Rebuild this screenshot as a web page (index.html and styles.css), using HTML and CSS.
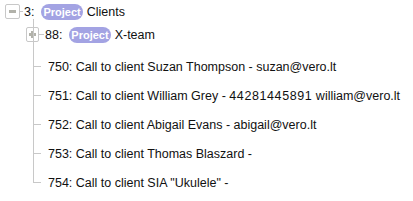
FILE: index.html
```html
<!DOCTYPE html>
<html>
<head>
<meta charset="utf-8">
<link rel="stylesheet" href="styles.css">
</head>
<body>
<div class="tree">
  <div class="row root">
    <span class="toggle"><span class="minus"></span></span>
    <span class="conn"></span>
    <span class="label">3: <span class="pill">Project</span> Clients</span>
  </div>
  <ul class="children">
    <li class="node group">
      <div class="row">
        <span class="toggle small"><span class="plus-h"></span><span class="plus-v"></span></span>
        <span class="conn short"></span>
        <span class="label">88: <span class="pill">Project</span> X-team</span>
      </div>
    </li>
    <li class="node leaf"><span class="label">750: Call to client Suzan Thompson - suzan@vero.lt</span></li>
    <li class="node leaf"><span class="label">751: Call to client William Grey - <span class="num">44281445891</span> william@vero.lt</span></li>
    <li class="node leaf"><span class="label">752: Call to client Abigail Evans - abigail@vero.lt</span></li>
    <li class="node leaf"><span class="label">753: Call to client Thomas Blaszard -</span></li>
    <li class="node leaf last"><span class="label">754: Call to client SIA "Ukulele" -</span></li>
  </ul>
</div>
</body>
</html>
```

FILE: styles.css
```css
html, body {
  margin: 0;
  padding: 0;
  background: #fff;
}
body {
  font-family: "Liberation Sans", Arial, sans-serif;
  font-size: 12.5px;
  color: #111;
}
.tree {
  padding: 0 0 0 5px;
}
.row {
  display: flex;
  align-items: center;
  height: 23px;
}
.toggle {
  position: relative;
  box-sizing: border-box;
  width: 15px;
  height: 15px;
  border: 1px solid #c8c8c8;
  border-radius: 2px;
  background: #fff;
  flex: none;
}
.toggle.small {
  width: 13px;
  height: 15px;
}
.minus {
  position: absolute;
  left: 3px;
  top: 5px;
  width: 7px;
  height: 3px;
  background: #b2b2aa;
}
.plus-h {
  position: absolute;
  left: 2px;
  top: 5px;
  width: 7px;
  height: 3px;
  background: #b2b2aa;
}
.plus-v {
  position: absolute;
  left: 4px;
  top: 3px;
  width: 3px;
  height: 7px;
  background: #b2b2aa;
}
.conn {
  width: 3px;
  height: 1px;
  background: #c8c8c8;
  margin-right: 1px;
  flex: none;
}
.conn.short {
  width: 5px;
  margin-right: 1px;
}
.label {
  white-space: nowrap;
}
.num {
  letter-spacing: 0.6px;
}
.pill {
  display: inline-block;
  background: #a3a3e3;
  color: #fff;
  font-weight: bold;
  font-size: 11px;
  line-height: 16px;
  padding: 0 2.5px;
  margin-left: 3px;
  border-radius: 8px;
}
.children {
  list-style: none;
  margin: 0;
  padding: 0 0 0 28px;
  position: relative;
}
.children::before {
  content: "";
  position: absolute;
  left: 28px;
  top: -4px;
  width: 1px;
  height: 8px;
  background: #c8c8c8;
}
.node {
  position: relative;
}
.group {
  margin-left: -7px;
  margin-bottom: 6px;
}
.leaf {
  display: flex;
  align-items: center;
  height: 29px;
  padding-left: 15px;
}
.leaf::before {
  content: "";
  position: absolute;
  left: 0;
  top: -14px;
  width: 1px;
  height: 29px;
  background: #c8c8c8;
}
.group + .leaf::before {
  top: -26px;
  height: 41px;
}
.leaf::after {
  content: "";
  position: absolute;
  left: 0;
  top: 14px;
  width: 8px;
  height: 1px;
  background: #c8c8c8;
}
```
